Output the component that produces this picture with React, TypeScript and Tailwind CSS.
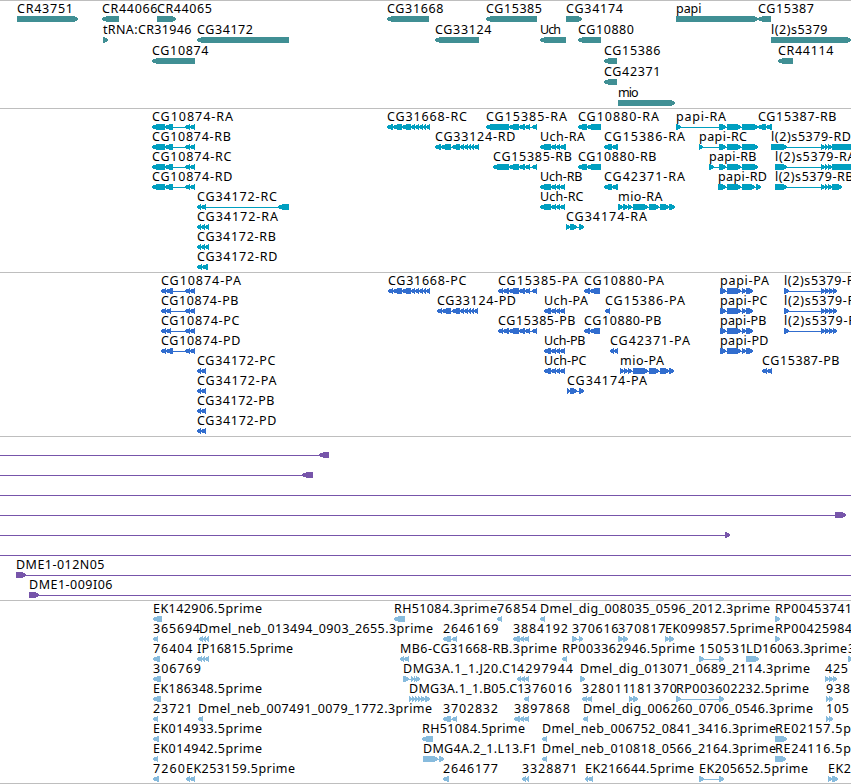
import { FC } from "react";

type Strand = "+" | "-";

// [row, strand, exons, label, right edge of the label]
type Feature = [number, Strand, string, string?, number?];

interface ITrackProps {
	name: string;
	features: Feature[];
	color: string;
	height: number;
	rowHeight?: number;
}

const genes: Feature[] = [
	[0, "+", "17-78", "CR43751", 73],
	[0, "-", "102-119", "CR44066", 157.5],
	[0, "+", "157-176", "CR44065", 212],
	[0, "-", "387-429", "CG31668", 443.5],
	[0, "-", "486-537", "CG15385", 542],
	[0, "+", "566-582", "CG34174", 623],
	[0, "+", "676-758", "papi", 701.5],
	[0, "-", "758-771", "CG15387", 814],
	[1, "+", "103-108", "tRNA:CR31946", 191.5],
	[1, "-", "197-289", "CG34172", 253],
	[1, "-", "435-479", "CG33124", 491.5],
	[1, "-", "540-566", "Uch", 561],
	[1, "-", "578-601", "CG10880", 634],
	[1, "+", "771-851", "l(2)s5379", 827.5],
	[2, "-", "152-195", "CG10874", 208.5],
	[2, "-", "604-617", "CG15386", 660.5],
	[2, "-", "778-793", "CR44114", 833.5],
	[3, "-", "604-617", "CG42371", 660.5],
	[4, "+", "618-675", "mio", 638.5],
];

const transcripts: Feature[] = [
	[0, "-", "152-165 165-173 185-190 190-195", "CG10874-RA", 233],
	[1, "-", "152-165 165-173 185-190 190-195", "CG10874-RB", 231],
	[2, "-", "152-165 165-173 185-190 190-195", "CG10874-RC", 231.5],
	[3, "-", "152-165 165-173 185-190 190-195", "CG10874-RD", 232.5],
	[4, "-", "197-201 201-206 278-289", "CG34172-RC", 277],
	[5, "-", "197-201 201-205 205-209", "CG34172-RA", 278],
	[6, "-", "197-201 201-205 205-209", "CG34172-RB", 276],
	[7, "-", "197-202 202-208", "CG34172-RD", 277.5],
	[0, "-", "387-393 393-402 402-411 411-415 415-419 419-423 423-426 426-430", "CG31668-RC", 467],
	[1, "-", "435-441 441-451 452-460 460-464 464-468 468-471 471-474 474-479", "CG33124-RD", 515.5],
	[0, "-", "486-509 509-519 519-525 525-530 532-537", "CG15385-RA", 567],
	[2, "-", "493-509 509-519 519-525 525-530 532-537", "CG15385-RB", 572],
	[1, "-", "540-551 551-556 556-560 560-566", "Uch-RA", 585],
	[3, "-", "540-551 551-556 556-560 560-565", "Uch-RB", 582.5],
	[4, "-", "540-551 551-556 556-560 560-565", "Uch-RC", 583.5],
	[5, "+", "566-570 570-577 579-584", "CG34174-RA", 647],
	[0, "-", "578-587 587-601", "CG10880-RA", 659],
	[2, "-", "578-587 587-601", "CG10880-RB", 656.5],
	[1, "-", "604-612 612-618", "CG15386-RA", 685],
	[3, "-", "604-612 612-618", "CG42371-RA", 685],
	[4, "+", "618-623 623-628 628-632 633-648 649-659 660-669 669-675", "mio-RA", 662.5],
	[0, "+", "676-681 719-726 727-741 742-758", "papi-RA", 726],
	[1, "+", "699-703 719-726 727-741 742-758", "papi-RC", 747],
	[2, "+", "709-714 719-726 727-741 742-758", "papi-RB", 756.5],
	[3, "+", "718-726 727-741 742-755 756-761", "papi-RD", 767],
	[0, "-", "758-766 766-772", "CG15387-RB", 836.5],
	[1, "+", "771-787 821-825 825-828 828-832 832-855", "l(2)s5379-RD", 851],
	[2, "+", "775-787 821-825 825-828 828-832 832-855", "l(2)s5379-RA", 855.5],
	[3, "+", "775-787 821-825 825-828 828-832 832-842", "l(2)s5379-RB", 853.5],
];

const proteins: Feature[] = [
	[0, "-", "161-166 166-173 185-190 190-195", "CG10874-PA", 241],
	[1, "-", "161-166 166-171 185-190 190-195", "CG10874-PB", 238.5],
	[2, "-", "161-166 166-171 185-190 190-195", "CG10874-PC", 239.5],
	[3, "-", "161-166 166-173 185-190 190-195", "CG10874-PD", 240.5],
	[4, "-", "197-201 201-206", "CG34172-PC", 275.5],
	[5, "-", "197-201 201-206", "CG34172-PA", 276.5],
	[6, "-", "197-201 201-206", "CG34172-PB", 274.5],
	[7, "-", "197-201 201-206", "CG34172-PD", 276.5],
	[0, "-", "388-393 393-402 402-411 411-415 415-419 419-423 423-426 426-430", "CG31668-PC", 466.5],
	[1, "-", "437-442 442-451 452-460 460-464 464-468 468-471 471-474 474-478", "CG33124-PD", 516],
	[0, "-", "498-503 503-509 509-519 519-525 525-530 532-537", "CG15385-PA", 578],
	[2, "-", "498-503 503-509 509-519 519-525 525-530 532-537", "CG15385-PB", 575.5],
	[1, "-", "544-551 551-556 556-560 560-565", "Uch-PA", 588],
	[3, "-", "544-551 551-556 556-560 560-565", "Uch-PB", 585.5],
	[4, "-", "544-551 551-556 556-560 560-565", "Uch-PC", 586.5],
	[5, "+", "567-570 570-577 579-584", "CG34174-PA", 647],
	[0, "-", "584-590 590-600", "CG10880-PA", 664],
	[2, "-", "584-590 590-600", "CG10880-PB", 661.5],
	[1, "-", "605-610", "CG15386-PA", 685],
	[3, "-", "610-614 614-618", "CG42371-PA", 690],
	[4, "+", "620-624 624-628 628-632 633-648 649-659 660-669 669-674", "mio-PA", 664],
	[0, "+", "720-726 727-741 742-746 746-753", "papi-PA", 769],
	[1, "+", "720-726 727-741 742-746 746-753", "papi-PC", 767.5],
	[2, "+", "720-726 727-741 742-746 746-753", "papi-PB", 766.5],
	[3, "+", "720-726 727-741 742-746 746-753", "papi-PD", 768.5],
	[0, "+", "784-789 821-825 825-829 829-833 833-837", "l(2)s5379-PD", 864],
	[1, "+", "784-789 821-825 825-829 829-833 833-837", "l(2)s5379-PB", 864],
	[2, "+", "784-789 821-825 825-829 829-833 833-837", "l(2)s5379-PA", 864],
	[4, "-", "762-767 767-772", "CG15387-PB", 839.5],
];

// clones run past the visible window, so some exons sit off screen
const clones: Feature[] = [
	[0, "-", "-20--10 319-329"],
	[1, "-", "-20--10 302-313"],
	[2, "+", "-20--10 870-880"],
	[3, "+", "-20--10 835-846"],
	[4, "+", "-20--10 725-730"],
	[5, "+", "-20--10 870-880"],
	[6, "+", "16-26 870-880", "DME1-012N05", 104.5],
	[7, "+", "29-39 870-880", "DME1-009I06", 112.5],
];

const ests: Feature[] = [
	[0, "-", "153-162", "EK142906.5prime", 262],
	[0, "-", "394-405", "RH51084.3prime", 497],
	[0, "-", "497-502", "76854", 536.5],
	[0, "-", "540-545", "Dmel_dig_008035_0596_2012.3prime", 770],
	[0, "+", "775-780", "RP00453741", 852],
	[1, "-", "153-158", "365694", 200],
	[1, "-", "199-203 203-206 206-209", "Dmel_neb_013494_0903_2655.3prime", 433],
	[1, "-", "443-451 452-457", "2646169", 498.5],
	[1, "-", "513-520 520-524 524-529", "3884192", 568],
	[1, "+", "572-577 579-583", "370616", 618.5],
	[1, "+", "618-623 623-628", "370817", 665.5],
	[1, "+", "665-669 669-674", "EK099857.5prime", 774],
	[1, "+", "775-780", "RP00425984", 852],
	[2, "-", "153-160", "76404", 192.5],
	[2, "-", "197-202 202-205 205-209", "IP16815.5prime", 293],
	[2, "-", "400-404 404-409", "MB6-CG31668-RB.3prime", 557],
	[2, "-", "562-567", "RP003362946.5prime", 695],
	[2, "+", "699-704 719-724", "150531", 747],
	[2, "+", "746-759", "LD16063.3prime", 847],
	[2, "+", "848-853", "3", 855.5],
	[3, "-", "153-161", "306769", 201],
	[3, "+", "403-409 411-414 414-416 416-420", "DMG3A.1_1.J20.C1", 517.5],
	[3, "-", "517-521 521-525 525-529", "4297944", 573],
	[3, "+", "580-585", "Dmel_dig_013071_0689_2114.3prime", 810],
	[3, "+", "825-829 829-833 833-837", "425", 848],
	[4, "-", "153-161", "EK186348.5prime", 262],
	[4, "+", "409-412 412-415 415-418 418-421 421-425 425-430", "DMG3A.1_1.B05.C1", 524.5],
	[4, "-", "524-529", "376016", 572],
	[4, "-", "582-587 587-592", "328011", 630],
	[4, "+", "629-633 633-638", "181370", 677],
	[4, "+", "676-681 719-724", "RP003602232.5prime", 809],
	[4, "+", "826-829 829-833", "938", 850],
	[5, "-", "153-158", "23721", 192.5],
	[5, "-", "198-203", "Dmel_neb_007491_0079_1772.3prime", 432],
	[5, "-", "443-451 452-457", "3702832", 498],
	[5, "-", "514-520 520-524 524-529", "3897868", 570],
	[5, "-", "583-588", "Dmel_dig_006260_0706_0546.3prime", 813],
	[5, "+", "826-829 829-833", "105", 849],
	[6, "-", "153-159", "EK014933.5prime", 262],
	[6, "-", "422-433", "RH51084.5prime", 525],
	[6, "-", "542-547", "Dmel_neb_006752_0841_3416.3prime", 776],
	[6, "+", "775-787", "RE02157.5p", 851],
	[7, "-", "153-158", "EK014942.5prime", 262],
	[7, "+", "423-438 439-444", "DMG4A.2_1.L13.F1", 537],
	[7, "-", "542-547", "Dmel_neb_010818_0566_2164.3prime", 776],
	[7, "+", "775-786", "RE24116.5p", 851],
	[8, "-", "153-159", "7260", 185],
	[8, "-", "186-190 190-195", "EK253159.5prime", 295],
	[8, "-", "443-449", "2646177", 498],
	[8, "-", "522-526 526-529", "3328871", 577.5],
	[8, "-", "585-588 588-593", "EK216644.5prime", 694],
	[8, "+", "699-704 719-724", "EK205652.5prime", 808],
	[8, "+", "828-832 832-838", "EK2", 851],
];

const parseExons = (exons: string) =>
	exons.split(" ").map((exon) => {
		const [, start, end] = exon.match(/^(-?\d+)-(-?\d+)$/)!;
		return [Number(start), Number(end)];
	});

const arrowPoints = (start: number, end: number, y: number, strand: Strand) => {
	const tip = Math.min(5, end - start);
	const [base, point, dir] = strand === "+" ? [start, end, -1] : [end, start, 1];
	const neck = point + dir * tip;
	return [
		[base, y],
		[neck, y],
		[point + dir * tip * 0.4, y + 1],
		[point, y + 2.4],
		[point, y + 3.9],
		[point + dir * tip * 0.4, y + 5],
		[neck, y + 6],
		[base, y + 6],
	].join(" ");
};

const Track: FC<ITrackProps> = ({ name, features, color, height, rowHeight = 20 }) => {
	return (
		<section aria-label={name} className="w-full border-t border-[#bebebe]">
			<svg width={851} height={height} className={`block overflow-hidden ${color}`}>
				{features.map(([row, strand, exonList, label, right = 0], i) => {
					const exons = parseExons(exonList);
					const left = exons[0][0];
					const y = row * rowHeight + 15;

					return (
						<g key={i}>
							{exons.length > 1 && (
								<rect
									x={left}
									y={y + 3}
									width={exons[exons.length - 1][1] - left}
									height={1}
									fill="currentColor"
								/>
							)}
							{exons.map(([start, end]) => (
								<polygon
									key={start}
									points={arrowPoints(start, end, y, strand)}
									fill="currentColor"
									shapeRendering="crispEdges"
								/>
							))}
							{label && (
								<text x={left} y={y - 3} textLength={right - left} className="fill-black">
									{label}
								</text>
							)}
						</g>
					);
				})}
			</svg>
		</section>
	);
};

const App: FC = () => {
	return (
		<main className="flex w-[851px] flex-col overflow-hidden border-b border-[#bebebe] bg-white font-['Noto_Sans','DejaVu_Sans',sans-serif] text-[12.5px]">
			<Track name="Genes" features={genes} color="text-[#408f94]" height={107} rowHeight={21} />
			<Track name="Transcripts" features={transcripts} color="text-[#009fc0]" height={163} />
			<Track name="Proteins" features={proteins} color="text-[#316dce]" height={163} />
			<Track name="Clones" features={clones} color="text-[#7755aa]" height={163} />
			<Track name="ESTs" features={ests} color="text-[#87bbdd]" height={182} />
		</main>
	);
};

export default App;
